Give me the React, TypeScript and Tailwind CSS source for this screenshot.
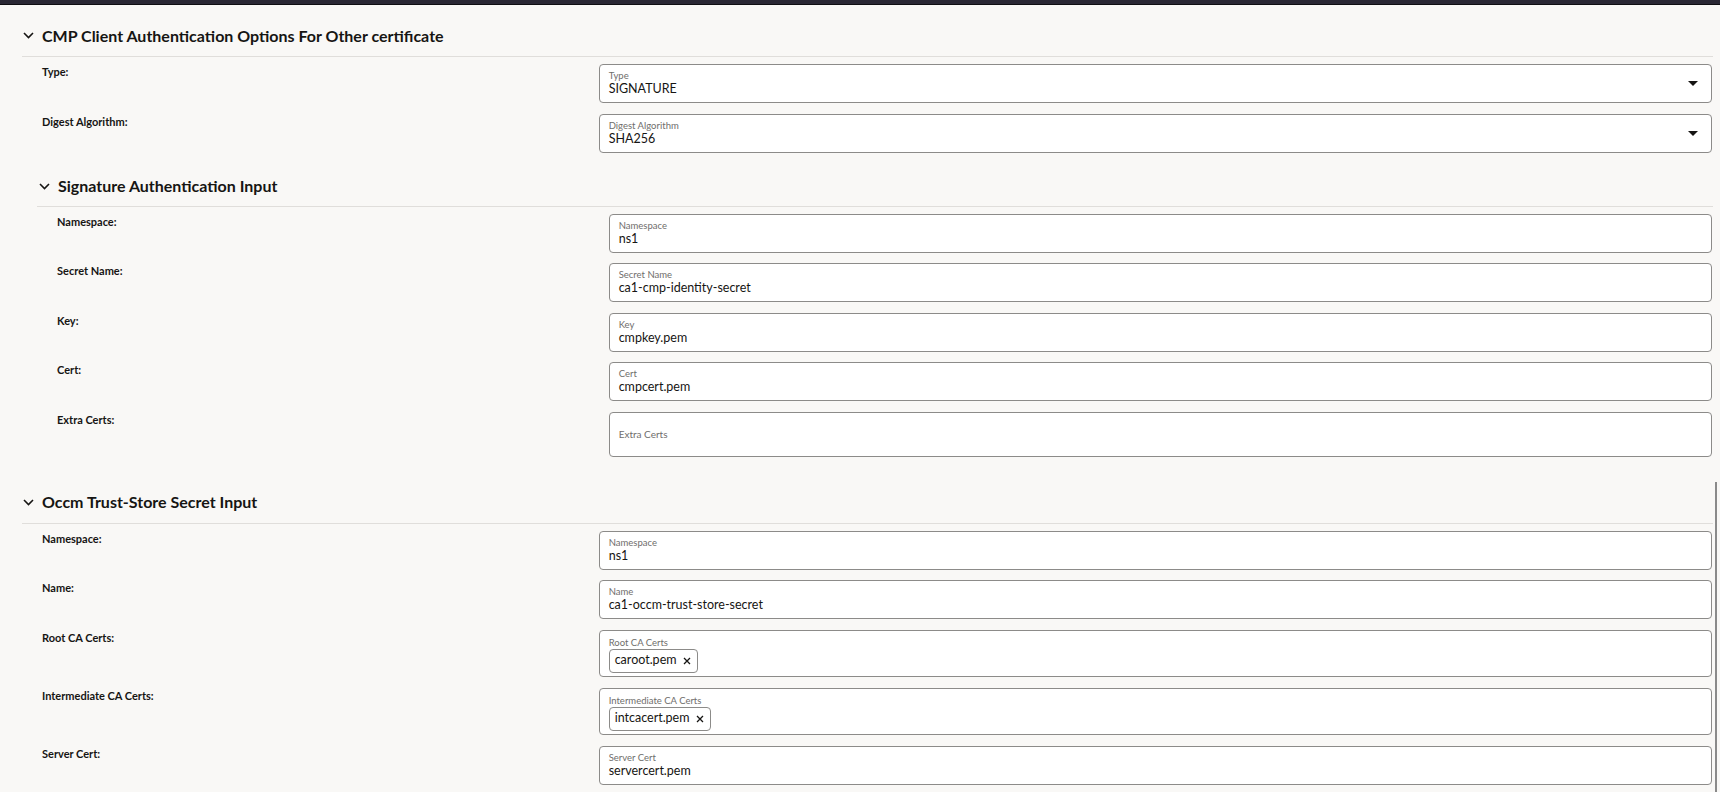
import React from 'react';

type Field = {
  label: string;
  value?: string;
  select?: boolean;
  chips?: string[];
  placeholder?: boolean;
};

const cmpFields: Field[] = [
  { label: 'Type', value: 'SIGNATURE', select: true },
  { label: 'Digest Algorithm', value: 'SHA256', select: true },
];

const signatureFields: Field[] = [
  { label: 'Namespace', value: 'ns1' },
  { label: 'Secret Name', value: 'ca1-cmp-identity-secret' },
  { label: 'Key', value: 'cmpkey.pem' },
  { label: 'Cert', value: 'cmpcert.pem' },
  { label: 'Extra Certs', placeholder: true },
];

const trustStoreFields: Field[] = [
  { label: 'Namespace', value: 'ns1' },
  { label: 'Name', value: 'ca1-occm-trust-store-secret' },
  { label: 'Root CA Certs', chips: ['caroot.pem'] },
  { label: 'Intermediate CA Certs', chips: ['intcacert.pem'] },
  { label: 'Server Cert', value: 'servercert.pem' },
];

function Chevron() {
  return (
    <svg width="11" height="7" viewBox="0 0 11 7" fill="none" className="shrink-0">
      <path d="M1 1l4.5 4.5L10 1" stroke="#161513" strokeWidth="1.6" />
    </svg>
  );
}

function Caret() {
  return (
    <svg width="10" height="5" viewBox="0 0 10 5" className="shrink-0">
      <path d="M0 0h10L5 5z" fill="#161513" />
    </svg>
  );
}

function InputBox({ field }: { field: Field }) {
  if (field.placeholder) {
    return (
      <div className="h-[45px] flex items-center px-[9px] bg-white border border-[#8c8b89] rounded-[4px]">
        <span className="text-[10px] text-[#6f6e6c]">{field.label}</span>
      </div>
    );
  }

  if (field.chips) {
    return (
      <div className="h-[47.5px] px-[9px] pt-[6px] bg-white border border-[#8c8b89] rounded-[4px]">
        <div className="text-[9.5px] leading-[12px] text-[#6f6e6c]">{field.label}</div>
        <div className="flex gap-1">
          {field.chips.map((chip) => (
            <span
              key={chip}
              className="h-[24px] flex items-center gap-[6px] pl-[5px] pr-[6px] border border-[#8c8b89] rounded-[4px] text-[12.5px] text-[#161513]"
            >
              {chip}
              <svg width="8" height="8" viewBox="0 0 8 8">
                <path d="M1 1l6 6M7 1L1 7" stroke="#161513" strokeWidth="1.3" />
              </svg>
            </span>
          ))}
        </div>
      </div>
    );
  }

  return (
    <div className="h-[39px] flex items-center pl-[9px] pr-[13px] bg-white border border-[#8c8b89] rounded-[4px]">
      <div className="flex-1 self-start pt-[5px]">
        <div className="text-[9.5px] leading-[12px] text-[#6f6e6c]">{field.label}</div>
        <div className="text-[12.5px] leading-[14px] text-[#161513]">{field.value}</div>
      </div>
      {field.select && <Caret />}
    </div>
  );
}

function FieldRows({ fields }: { fields: Field[] }) {
  return (
    <div className="flex flex-col gap-[10.5px]">
      {fields.map((field) => (
        <div key={field.label} className="grid grid-cols-[1fr_2fr]">
          <div className="pt-px text-[11px] leading-[14px] font-bold text-[#161513]">{field.label}:</div>
          <InputBox field={field} />
        </div>
      ))}
    </div>
  );
}

function SectionHeader({ title, height }: { title: string; height: string }) {
  return (
    <div className={`${height} flex items-center gap-[8px] pl-px border-b border-[#e0dedb]`}>
      <Chevron />
      <h2 className="text-[16px] font-bold text-[#161513]">{title}</h2>
    </div>
  );
}

export default function App() {
  return (
    <div
      className="relative w-full h-[792px] overflow-hidden bg-[#f9f8f6]"
      style={{ fontFamily: 'Lato, "Noto Sans", sans-serif' }}
    >
      <div className="h-[5px] bg-[#2a2834] border-b border-[#0f0e12]" />

      <div className="ml-[22px] mr-[7px] pt-[10px]">
        {/* CMP client authentication */}
        <section>
          <SectionHeader title="CMP Client Authentication Options For Other certificate" height="h-[42px]" />
          <div className="pl-[20px] pr-px pt-[7px]">
            <FieldRows fields={cmpFields} />
          </div>
        </section>

        {/* nested signature section */}
        <section className="ml-[15px] mt-[14px]">
          <div className="pl-[2px] border-b border-[#e0dedb]">
            <div className="h-[39px] flex items-center gap-[8px]">
              <Chevron />
              <h2 className="text-[16px] font-bold text-[#161513]">Signature Authentication Input</h2>
            </div>
          </div>
          <div className="pl-[20px] pr-px pt-[7px]">
            <FieldRows fields={signatureFields} />
          </div>
        </section>

        {/* trust store */}
        <section className="mt-[25px]">
          <SectionHeader title="Occm Trust-Store Secret Input" height="h-[42px]" />
          <div className="pl-[20px] pr-px pt-[7px]">
            <FieldRows fields={trustStoreFields} />
          </div>
        </section>
      </div>

      <div className="absolute right-[3px] top-[482px] bottom-0 w-[2px] bg-[#8a8a8a]" />
    </div>
  );
}
